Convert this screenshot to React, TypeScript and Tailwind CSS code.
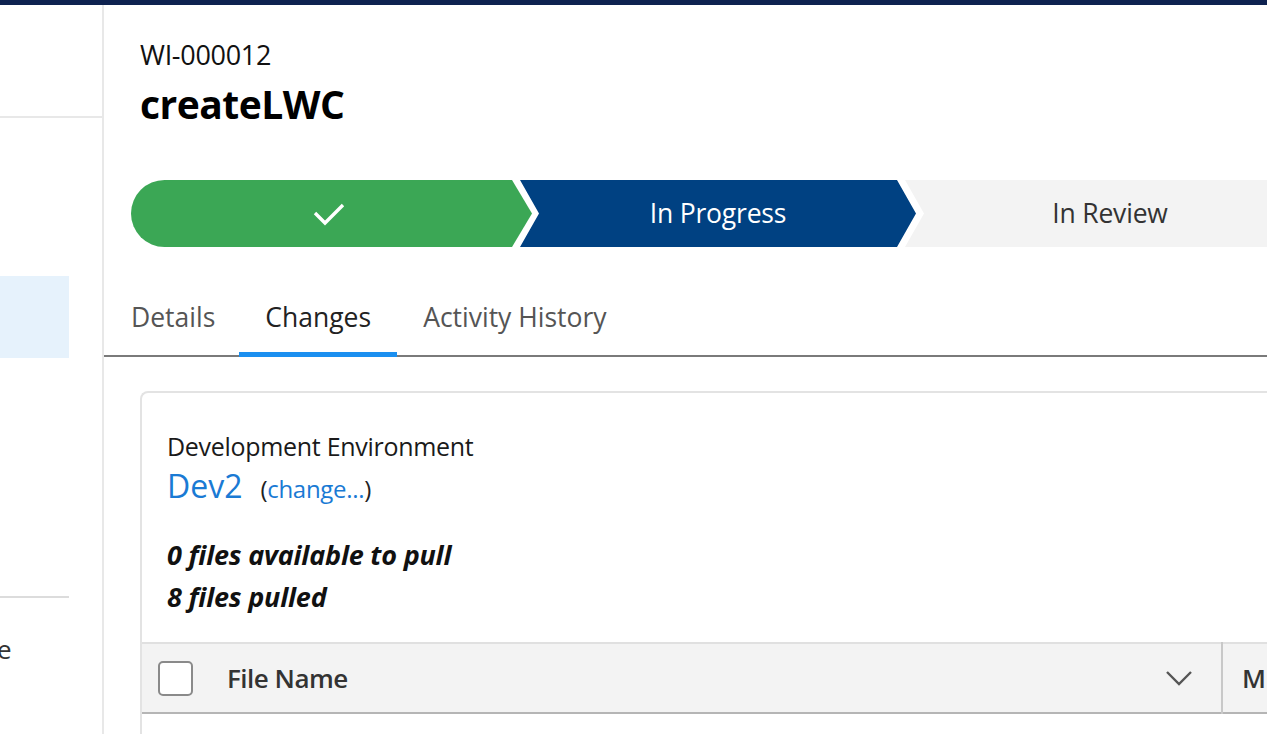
import { ReactNode } from 'react';

const FONT = { fontFamily: '"Open Sans", "Noto Sans", sans-serif' };

function Step({ children, className }: { children: ReactNode; className: string }) {
  return <div className={`h-[67px] flex items-center justify-center shrink-0 ${className}`}>{children}</div>;
}

function Sidebar() {
  return (
    <aside className="w-[104px] shrink-0 border-r-2 border-[#e8e8e8] flex flex-col">
      <div className="h-[113px] border-b-2 border-[#e8e8e8]" />
      <div className="h-[158px]" />
      <div className="w-[69px] h-[82px] bg-[#e6f2fc]" />
      <div className="h-[238px]" />
      <div className="w-[69px] border-t-2 border-[#dcdcdc]" />
      <div className="mt-[38px] ml-[-27px] text-[26px] leading-none text-[#333]">me</div>
    </aside>
  );
}

function PathBar() {
  return (
    <div className="flex pl-[27px] overflow-hidden">
      <Step className="w-[401px] bg-[#3ba755] rounded-l-full [clip-path:polygon(0_0,calc(100%-20px)_0,100%_50%,calc(100%-20px)_100%,0_100%)]">
        <svg width="34" height="24" viewBox="0 0 34 24" className="ml-[-6px]">
          <path d="M3 11 L13 21 L31 3" fill="none" stroke="#fff" strokeWidth="3.4" />
        </svg>
      </Step>
      <Step className="w-[396px] ml-[-12px] bg-[#004182] text-white [clip-path:polygon(0_0,calc(100%-19px)_0,100%_50%,calc(100%-19px)_100%,0_100%,19px_50%)]">
        <span className="text-[26.5px] tracking-[-0.2px]">In Progress</span>
      </Step>
      <Step className="w-[410px] ml-[-11px] bg-[#f3f3f3] text-[#333] [clip-path:polygon(0_0,100%_0,100%_100%,0_100%,19px_50%)]">
        <span className="text-[26.5px] tracking-[-0.2px]">In Review</span>
      </Step>
    </div>
  );
}

function Tabs() {
  return (
    <div className="flex border-b-2 border-[#7a7a7a] h-[77px] items-stretch pl-[27px] mr-[-20px]">
      <div className="flex items-center text-[26.5px] text-[#555] pr-[24px]">Details</div>
      <div className="flex items-center text-[26.5px] text-[#222] px-[26px] pt-[4px] border-b-[5px] border-[#1b8ff0] mb-[-2px]">Changes</div>
      <div className="flex items-center text-[26.5px] text-[#555] pl-[26px]">Activity History</div>
    </div>
  );
}

function ChangesCard() {
  return (
    <div className="ml-[36px] mt-[34px] border-2 border-[#e3e3e3] border-r-0 border-b-0 rounded-tl-[8px] flex flex-col">
      <div className="pl-[25px] pt-[37px] pb-[24px]">
        <div className="text-[25px] text-[#1a1a1a] leading-[32px] tracking-[-0.3px]">Development Environment</div>
        <div className="flex items-baseline gap-[18px] leading-[48px]">
          <span className="text-[32px] text-[#1a7ad4]">Dev2</span>
          <span className="text-[24px] text-[#1a7ad4] tracking-[-0.3px]">
            <span className="text-[#222]">(</span>change...<span className="text-[#222]">)</span>
          </span>
        </div>
        <div className="mt-[21px] text-[27px] font-bold italic text-[#111] leading-[42px] tracking-[-0.2px]">
          <div>0 files available to pull</div>
          <div>8 files pulled</div>
        </div>
      </div>
      <div className="h-[72px] bg-[#f3f3f3] border-t-2 border-[#e0e0e0] border-b-2 border-b-[#b5b5b5] flex items-center">
        <div className="w-[35px] h-[35px] ml-[16px] border-2 border-[#8a8a8a] rounded-[5px] bg-white shrink-0" />
        <div className="ml-[34px] text-[26px] font-semibold text-[#333] tracking-[-0.5px] flex-1">File Name</div>
        <svg width="28" height="16" viewBox="0 0 28 16" className="mr-[28px]">
          <path d="M2 2 L14 14 L26 2" fill="none" stroke="#555" strokeWidth="2.4" />
        </svg>
        <div className="w-[2px] h-[72px] bg-[#c8c8c8]" />
        <div className="w-[44px] pl-[19px] text-[26px] font-semibold text-[#333]">M</div>
      </div>
      <div className="h-[40px]" />
    </div>
  );
}

export default function App() {
  return (
    <div className="w-[1267px] h-[734px] overflow-hidden bg-white flex flex-col" style={FONT}>
      <div className="h-[5px] bg-[#0e2250] shrink-0" />
      <div className="flex flex-1 min-h-0">
        <Sidebar />
        <main className="flex-1 min-w-0 flex flex-col overflow-hidden">
          <div className="pl-[36px] pt-[33px]">
            <div className="text-[27px] text-[#111] leading-[34px] tracking-[-0.3px]">WI-000012</div>
            <div className="mt-[9px] text-[39px] font-bold text-[#000] leading-[46px] tracking-[-0.5px]">createLWC</div>
          </div>
          <div className="mt-[53px]">
            <PathBar />
          </div>
          <div className="mt-[33px]">
            <Tabs />
          </div>
          <ChangesCard />
        </main>
      </div>
    </div>
  );
}
